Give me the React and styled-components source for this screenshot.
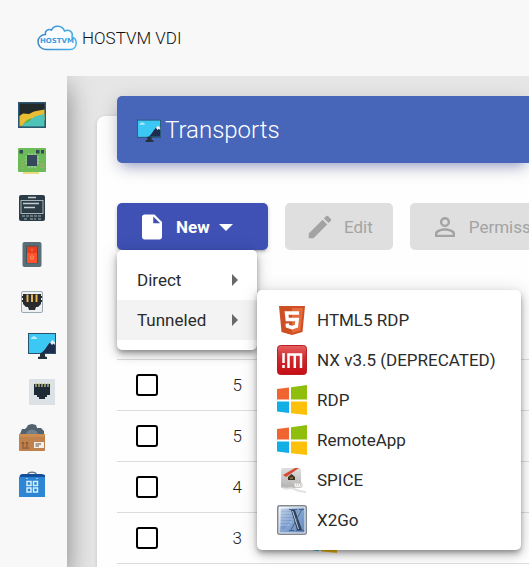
import React from "react";
import styled, { createGlobalStyle } from "styled-components";

const GlobalStyle = createGlobalStyle`
  *, *::before, *::after { box-sizing: border-box; }
  body {
    margin: 0;
    background: #e6e6e6;
    color: #212121;
    font-family: Roboto, "Liberation Sans", sans-serif;
    font-size: 17px;
    line-height: 24px;
  }
`;

const Page = styled.div`
  display: flex;
  flex-direction: column;
  min-height: 100vh;
  overflow-x: clip;
`;

const TopBar = styled.header`
  position: relative;
  z-index: 2;
  display: flex;
  align-items: center;
  height: 76px;
  padding: 0 37px;
  background: #f8f8f8;
`;

const Brand = styled.a`
  display: flex;
  align-items: center;
  gap: 5px;
  color: #111;
  font-size: 17px;
  font-weight: 300;
  text-decoration: none;
  white-space: nowrap;
`;

const Body = styled.div`
  display: flex;
  flex: 1;
`;

const SideNav = styled.nav`
  flex: none;
  width: 67px;
  padding-top: 16px;
  background: #f8f8f8;
  box-shadow: 0 12px 28px 0 rgba(0, 0, 0, 0.38), 0 4px 25px 0 rgba(0, 0, 0, 0.08);
`;

const NavLink = styled.a`
  display: flex;
  align-items: center;
  height: 46px;
  padding-left: ${(p) => (p.$nested ? "28px" : "18px")};
`;

const Icon = styled.svg`
  display: block;
  flex: none;
`;

const Main = styled.main`
  display: flex;
  flex: 1;
  min-width: 0;
  padding: 40px 0 0 30px;
`;

const Card = styled.section`
  flex: 1;
  min-width: 0;
  padding-left: 20px;
  border-radius: 8px 0 0 0;
  background: #fefefe;
  box-shadow: 0 1px 4px 0 rgba(0, 0, 0, 0.14);
`;

const CardHeader = styled.div`
  display: flex;
  align-items: center;
  gap: 4px;
  height: 67px;
  margin-top: -20px;
  padding: 0 20px;
  border-radius: 5px 0 0 5px;
  background: #4765b9;
  color: #fff;
  box-shadow: 0 4px 20px 0 rgba(0, 0, 0, 0.14), 0 7px 12px -5px rgba(63, 81, 181, 0.46);
`;

const Title = styled.h1`
  margin: 0;
  font-size: 24px;
  font-weight: 300;
  line-height: 32px;
`;

const Toolbar = styled.div`
  display: flex;
  gap: 17px;
  padding-top: 40px;
`;

const ToolButton = styled.button`
  display: flex;
  flex: none;
  align-items: center;
  gap: 9px;
  height: 47px;
  padding: 0 20px;
  border: 0;
  border-radius: 5px;
  background: #dfdfdf;
  color: #a3a3a3;
  font: inherit;
  white-space: nowrap;
`;

const PrimaryButton = styled(ToolButton)`
  width: 151px;
  background: #3f51b5;
  color: #fff;
  font-weight: 700;
  box-shadow: 0 3px 2px -2px rgba(0, 0, 0, 0.2), 0 2px 4px 0 rgba(0, 0, 0, 0.2);
`;

const MenuAnchor = styled.div`
  position: relative;
  z-index: 1;
`;

const MenuPanel = styled.div`
  position: absolute;
  top: 100%;
  left: 0;
  padding: 10px 0;
  border-radius: 5px;
  background: #fff;
  box-shadow: 0 3px 5px -1px rgba(0, 0, 0, 0.3), 0 5px 10px 0 rgba(0, 0, 0, 0.2), 0 1px 18px 0 rgba(0, 0, 0, 0.14);
`;

const RootMenu = styled(MenuPanel)`
  width: 140px;
`;

const SubMenu = styled(MenuPanel)`
  top: -10px;
  left: 100%;
  min-width: 264px;
`;

const SubMenuAnchor = styled.div`
  position: relative;
`;

const MenuItem = styled.button`
  display: flex;
  align-items: center;
  gap: 10px;
  width: 100%;
  height: 40px;
  padding: 0 18px 0 20px;
  border: 0;
  background: ${(p) => (p.$active ? "#f3f3f3" : "transparent")};
  color: #2b2b2b;
  font: inherit;
  text-align: left;
  white-space: nowrap;
`;

const Arrow = styled(Icon)`
  margin-left: auto;
`;

const Table = styled.table`
  width: 100%;
  margin-top: 57px;
  border-collapse: collapse;
  table-layout: fixed;
  font-weight: 300;
`;

const HeadRow = styled.tr`
  height: 52px;
  border-bottom: 1px solid #dcdcdc;
`;

const Row = styled.tr`
  height: 51px;
  border-bottom: 1px solid #dcdcdc;
`;

const HeadCell = styled.th`
  width: ${(p) => p.$width || "auto"};
  padding: 0;
`;

const CheckCell = styled.td`
  padding: 0 0 0 19px;
`;

const NumberCell = styled.td`
  padding: 0;
  text-align: right;
`;

const TypeCell = styled.td`
  padding: 0 0 0 65px;
`;

const Checkbox = styled.input`
  display: block;
  width: 22px;
  height: 22px;
  margin: 0;
  border: 2px solid #000;
  border-radius: 3px;
  background: #fff;
  appearance: none;
`;

function CloudLogo() {
  return (
    <Icon width="40" height="26" viewBox="0 0 40 26" aria-hidden="true">
      <defs>
        <linearGradient id="cloud" x1="0" y1="0" x2="1" y2="0">
          <stop offset="0" stopColor="#3f86c6" />
          <stop offset="1" stopColor="#45b4f0" />
        </linearGradient>
      </defs>
      <path
        d="M9 24.5C4.500 24.500 1 21 1 16.800C1 12.500 4.500 9.500 8.500 9.600C7.500 5.500 12 3.500 14.500 5.200C16.500 -.5 25.500 0 27.500 6C32.500 3.500 36.500 7.500 35 12C38 12.800 39.200 15.500 39.200 18C39.200 22 36.500 24.500 33 24.500Z"
        fill="#fafdff"
        stroke="url(#cloud)"
        strokeWidth="1.5"
      />
      <text x="20" y="18" textAnchor="middle" fill="#3c9ce0" fontSize="7" fontWeight="700" fontFamily="DejaVu Sans, sans-serif">
        HOSTVM
      </text>
    </Icon>
  );
}

const MonitorArt = () => (
  <>
    <path d="M0 2H28V23H0Z" fill="#2a536b" />
    <path d="M1 3H27V22H1Z" fill="#3cc8f4" />
    <path d="M13 22C17 20 19 14 23.500 10L27 12V22Z" fill="#1c2d50" />
    <path d="M22 11.500L24.500 9L27 11.500V14L25.500 12.500L24 14Z" fill="#e8f4fb" />
    <path d="M3 8V7L5 5.500L6.500 5L8 6.500H9V8Z" fill="#b5ecfb" />
    <path d="M12 22H17V25.500L19 26V28H10V26L12 25.500Z" fill="#26323b" />
  </>
);

const navArt = {
  wallpaper: (
    <>
      <path d="M0 1H28V27H0Z" fill="#2d5875" />
      <path d="M1.500 2.500H26.500V25.500H1.500Z" fill="#222a2c" />
      <path d="M1.500 15L5 12.500L11 13L16 10.500L21 9.500L26.500 8.500V19L12 22L1.500 25.500Z" fill="#ebbd32" />
      <path d="M3 25.500L8 20.500L13 18L18 15L26.500 13V25.500Z" fill="#4ec4b8" />
      <path d="M5 23L9 19L14 17L12 20L8 22Z" fill="#60b04c" />
    </>
  ),
  board: (
    <>
      <path d="M5 24H21V27H5Z" fill="#e8dc80" />
      <rect y="1" width="28" height="24" rx="1" fill="#6cbb58" />
      <path d="M1.500 3H5V6.500H1.500ZM18 3H21.500V6.500H18ZM23 3H26V6.500H23Z" fill="#34475c" />
      <path d="M9 8H19V19H9Z" fill="#34475c" />
      <path d="M11 6.500V8M14 6.500V8M17 6.500V8M11 19V21M14 19V21M17 19V21M7.500 10H9M7.500 13H9M7.500 16H9M19 10H21M19 13H21M19 16H21" stroke="#bad6b2" />
      <path d="M3 15H6M3 18H6M3 21H6M22 17H26M22 20H26" stroke="#a9a868" strokeWidth="1.500" />
    </>
  ),
  server: (
    <>
      <rect x="1" y="2" width="26" height="26" rx="2" fill="#2c3c46" />
      <rect x="3" y="7.500" width="22" height="13" fill="none" stroke="#a8b3b9" />
      <path d="M10 4.500H18M5 10.500H21M6 14.500H17" stroke="#c5ced2" strokeWidth="1.500" />
      <path d="M4 23H24M6 26H10M12 26H18M20 26H23" stroke="#a8b3b9" strokeDasharray="3 1" />
    </>
  ),
  power: (
    <>
      <rect x="4.500" y="3" width="19" height="25" rx="2" fill="#5a6e78" />
      <rect x="8" y="6.500" width="12" height="18" fill="#46545b" />
      <rect x="9" y="7.500" width="10" height="7" fill="#e93d1d" />
      <rect x="9" y="14" width="10" height="10" fill="#ff542b" />
      <path d="M14 9.500V12.500" stroke="#f87750" />
      <circle cx="14" cy="18.500" r="1.700" fill="none" stroke="#fa9a65" />
    </>
  ),
  socket: (
    <>
      <rect x="3.500" y="6.500" width="21" height="21" rx="1.500" fill="#eef1f3" stroke="#9ba9b2" />
      <path d="M5 9H23V19L20 22H18L17 25H11L10 22H8L5 19Z" fill="#282a2b" />
      <path d="M4 12H24M4 16H24" stroke="#282a2b" strokeWidth="2" />
      <path d="M9.500 9.500V17M14 9.500V17M18.500 9.500V17" stroke="#e2b456" strokeWidth="2" />
    </>
  ),
  monitor: <MonitorArt />,
  network: (
    <>
      <path d="M1 2H27V28H1Z" fill="#dce1e5" />
      <path d="M6 7H22V18H19V20H17V22H11V20H9V18H6Z" fill="#1d2a36" />
      <path d="M8 6V10M11 6V10M14 6V10M17 6V10M20 6V10" stroke="#c1c382" strokeWidth="1.300" />
    </>
  ),
  package: (
    <>
      <path d="M2 11L4 6H7L9 4L10 2L14 1L18 2L19 5H23L26 8V12Z" fill="#4f626d" />
      <path d="M8 12C8 5 20 5 20 12" fill="#73818a" />
      <rect x="1" y="11" width="26" height="17" rx="1" fill="#bf824d" />
      <path d="M1 11H27V14H1Z" fill="#cc8c54" />
      <path d="M16 19H26V25H16Z" fill="#f3eee7" />
      <path d="M17.500 21H23M17.500 23H21" stroke="#6d4d38" />
      <path d="M5 24V19M9 24V19M4 20.500L5 19L6 20.500M8 20.500L9 19L10 20.500M4 25H11" stroke="#80502f" fill="none" />
    </>
  ),
  store: (
    <>
      <path d="M10 7V5C10 2.500 18 2.500 18 5V7" fill="none" stroke="#667889" strokeWidth="1.500" />
      <path d="M2 6L4 5H24L27 6V10H1Z" fill="#174e9c" />
      <path d="M1 8H27V28H1Z" fill="#2c86d3" />
      <path d="M9 12.500H13V16.500H9ZM15.500 12.500H19.500V16.500H15.500ZM9 19H13V23H9ZM15.500 19H19.500V23H15.500Z" fill="#2385ce" stroke="#d6efff" strokeWidth="1.500" />
      <path d="M8 9.500H10M18 9.500H20" stroke="#8bc7f2" />
    </>
  ),
};

const navItems = [
  { id: "wallpaper", label: "Summary" },
  { id: "board", label: "Services" },
  { id: "server", label: "Authenticators" },
  { id: "power", label: "OS Managers" },
  { id: "socket", label: "Connectivity" },
  { id: "monitor", label: "Transports", nested: true },
  { id: "network", label: "Networks", nested: true },
  { id: "package", label: "Pools" },
  { id: "store", label: "Tools" },
];

const transportArt = {
  html5: (
    <>
      <path d="M2 1H28L25.500 27L15 30L4.500 27Z" fill="#cf4f24" />
      <path d="M15 3H26L23.500 25.500L15 28Z" fill="#e56a3c" />
      <path d="M22 8H9.500L10.300 14.500H20.200L19.400 21.200L15 22.600L10.500 21.200L10.200 18.500" fill="none" stroke="#fff" strokeWidth="3.500" />
    </>
  ),
  nx: (
    <>
      <defs>
        <linearGradient id="nxRed" x1="0" y1="0" x2="0" y2="1">
          <stop stopColor="#e76061" />
          <stop offset=".45" stopColor="#cd292d" />
          <stop offset="1" stopColor="#c70d15" />
        </linearGradient>
      </defs>
      <rect x=".5" y=".5" width="29" height="29" rx="3" fill="url(#nxRed)" stroke="#b92025" />
      <path d="M6.500 8V18M6.500 20V23M11.500 23V9.500H24V23M17.800 9.500V23" fill="none" stroke="#fff" strokeWidth="2.500" />
    </>
  ),
  windows: (
    <>
      <path d="M0 4L12 2.500V14.500H0Z" fill="#f0642f" />
      <path d="M14 2.300L30 0V14.500H14Z" fill="#8fbf0c" />
      <path d="M0 16.500H12V28L0 26.500Z" fill="#12aee4" />
      <path d="M14 16.500H30V30L14 28.200Z" fill="#fdc00b" />
    </>
  ),
  spice: (
    <>
      <defs>
        <linearGradient id="spiceBox" x1="0" y1="0" x2="0" y2="1">
          <stop stopColor="#dfdfdd" />
          <stop offset="1" stopColor="#b4b3b1" />
        </linearGradient>
      </defs>
      <rect x="4" y="3" width="20" height="20" rx="2" fill="url(#spiceBox)" />
      <path d="M6 10L18 3H22L9 12Z" fill="#d84a36" />
      <path d="M11 12L14.500 9L18 12V15H11Z" fill="#3b322a" />
      <path d="M13 12H16V14H13Z" fill="#87652f" />
      <path d="M6 23C10 25 13 22 17 24S23 27 29 27" fill="none" stroke="#e2e2e2" strokeWidth="2" />
      <path d="M17 18L25 18.500V22L18 22.500Z" fill="#f7f7f7" stroke="#ccc" />
      <path d="M19 20H24" stroke="#aaa" strokeDasharray="1 1" />
    </>
  ),
  x2go: (
    <>
      <defs>
        <linearGradient id="x2goBlue" x1="0" y1="0" x2="1" y2="1">
          <stop stopColor="#eef5fc" />
          <stop offset=".5" stopColor="#86a6d2" />
          <stop offset="1" stopColor="#5f86bd" />
        </linearGradient>
      </defs>
      <rect x=".75" y=".75" width="28.500" height="28.500" rx="2" fill="#f4f7fa" stroke="#81868f" strokeWidth="1.500" />
      <path d="M2.500 2.500H27.500V27.500H2.500Z" fill="url(#x2goBlue)" />
      <path d="M4 4H24L7 24H4Z" fill="#4c77b5" opacity=".35" />
      <path d="M2 5H19M2 8H19M2 11H18M2 14H18M2 17H15M2 20H13" stroke="#e4effa" opacity=".45" />
      <path d="M14 5L18 5L25 25H20Z" fill="#2f405c" />
      <path d="M24.500 5L14 25M22 4.500H27M12 25.500H17M12 4.500H20M19 25.500H27" stroke="#4a6284" />
      <path d="M15.500 6L21.500 24" stroke="#c3d0df" />
    </>
  ),
};

const transports = [
  { label: "HTML5 RDP", art: "html5" },
  { label: "NX v3.5 (DEPRECATED)", art: "nx" },
  { label: "RDP", art: "windows" },
  { label: "RemoteApp", art: "windows" },
  { label: "SPICE", art: "spice" },
  { label: "X2Go", art: "x2go" },
];

const rows = [
  { id: "a", priority: 5 },
  { id: "b", priority: 5 },
  { id: "c", priority: 4 },
  { id: "d", priority: 3 },
];

const TransportIcon = ({ name }) => (
  <Icon width="30" height="30" viewBox="0 0 30 30" aria-hidden="true">
    {transportArt[name]}
  </Icon>
);

const MenuArrow = () => (
  <Arrow width="8" height="14" viewBox="0 0 8 14" aria-hidden="true">
    <path d="M1 1L7 7L1 13Z" fill="#686868" />
  </Arrow>
);

const ActionIcon = ({ d }) => (
  <Icon width="30" height="30" viewBox="0 0 24 24" fill="currentColor" aria-hidden="true">
    <path d={d} />
  </Icon>
);

function NewMenu() {
  return (
    <MenuAnchor>
      <PrimaryButton type="button" aria-haspopup="menu" aria-expanded="true">
        <ActionIcon d="M6 2c-1.100 0-1.990.9-1.990 2L4 20c0 1.100.89 2 1.990 2H18c1.100 0 2-.9 2-2V8l-6-6H6zm7 7V3.500L18.500 9H13z" />
        New
        <Icon width="14" height="8" viewBox="0 0 14 8" aria-hidden="true">
          <path d="M0 1H14L7 8Z" fill="currentColor" />
        </Icon>
      </PrimaryButton>
      <RootMenu role="menu">
        <MenuItem type="button" role="menuitem">
          Direct
          <MenuArrow />
        </MenuItem>
        <SubMenuAnchor>
          <MenuItem type="button" role="menuitem" aria-haspopup="menu" aria-expanded="true" $active>
            Tunneled
            <MenuArrow />
          </MenuItem>
          <SubMenu role="menu">
            {transports.map((t) => (
              <MenuItem key={t.label} type="button" role="menuitem">
                <TransportIcon name={t.art} />
                {t.label}
              </MenuItem>
            ))}
          </SubMenu>
        </SubMenuAnchor>
      </RootMenu>
    </MenuAnchor>
  );
}

function TransportTable() {
  return (
    <Table>
      <thead>
        <HeadRow>
          <HeadCell $width="60px" aria-label="Select" />
          <HeadCell $width="65px" aria-label="Priority" />
          <HeadCell aria-label="Type" />
        </HeadRow>
      </thead>
      <tbody>
        {rows.map((row) => (
          <Row key={row.id}>
            <CheckCell>
              <Checkbox type="checkbox" aria-label="Select transport" />
            </CheckCell>
            <NumberCell>{row.priority}</NumberCell>
            <TypeCell>
              <TransportIcon name="windows" />
            </TypeCell>
          </Row>
        ))}
      </tbody>
    </Table>
  );
}

export default function App() {
  return (
    <Page>
      <GlobalStyle />
      <TopBar>
        <Brand href="#home">
          <CloudLogo />
          HOSTVM VDI
        </Brand>
      </TopBar>
      <Body>
        <SideNav>
          {navItems.map((item) => (
            <NavLink key={item.id} href={`#${item.id}`} aria-label={item.label} $nested={item.nested}>
              <Icon width="28" height="28" viewBox="0 0 28 28" aria-hidden="true">
                {navArt[item.id]}
              </Icon>
            </NavLink>
          ))}
        </SideNav>
        <Main>
          <Card>
            <CardHeader>
              <Icon width="24" height="24" viewBox="0 0 28 28" aria-hidden="true">
                <MonitorArt />
              </Icon>
              <Title>Transports</Title>
            </CardHeader>
            <Toolbar>
              <NewMenu />
              <ToolButton type="button" disabled>
                <ActionIcon d="M3 17.250V21h3.750L17.810 9.940l-3.750-3.750L3 17.250zM20.710 7.040a1 1 0 0 0 0-1.410l-2.340-2.340a1 1 0 0 0-1.410 0l-1.830 1.830 3.750 3.750 1.830-1.830z" />
                Edit
              </ToolButton>
              <ToolButton type="button" disabled>
                <ActionIcon d="M12 5.900a2.100 2.100 0 1 1 0 4.200 2.100 2.100 0 0 1 0-4.200m0 9c2.970 0 6.100 1.460 6.100 2.100v1.100H5.900V17c0-.64 3.130-2.100 6.100-2.100M12 4C9.790 4 8 5.790 8 8s1.790 4 4 4 4-1.790 4-4-1.790-4-4-4zm0 9c-2.670 0-8 1.340-8 4v3h16v-3c0-2.660-5.330-4-8-4z" />
                Permissions
              </ToolButton>
            </Toolbar>
            <TransportTable />
          </Card>
        </Main>
      </Body>
    </Page>
  );
}
